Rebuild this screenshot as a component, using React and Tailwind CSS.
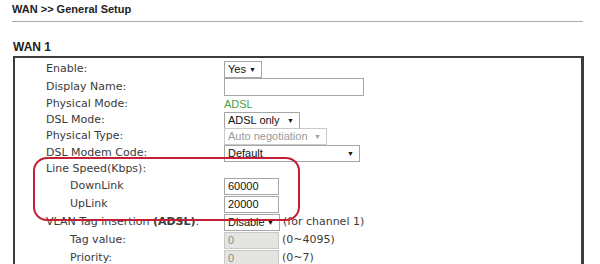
import React from "react";

const labelFont = { fontFamily: '"DejaVu Sans", Verdana, sans-serif' };
const ctrlFont = { fontFamily: '"Liberation Sans", Arial, sans-serif' };

function Select({ value, width, disabled }) {
  return (
    <div
      style={ctrlFont}
      className={`flex h-[17px] items-center justify-between border bg-white pl-[3px] pr-[5px] text-[11px] leading-none ${
        disabled ? "border-[#c9c9c9] text-[#9a9a9a]" : "border-[#a6a6a6] text-[#111]"
      } ${width}`}
    >
      <span>{value}</span>
      <span className={`text-[7px] ${disabled ? "text-[#9a9a9a]" : "text-[#111]"}`}>▼</span>
    </div>
  );
}

function Input({ value, width, disabled, height = "h-[17px]" }) {
  return (
    <div
      style={ctrlFont}
      className={`flex items-center border pl-[3px] text-[11px] leading-none ${height} ${width} ${
        disabled ? "border-[#c9c9c9] bg-[#e4e4e1] text-[#8a8a8a]" : "border-[#a6a6a6] bg-white text-[#111]"
      }`}
    >
      {value}
    </div>
  );
}

function Row({ h, label, indent, children }) {
  return (
    <div className={`flex items-center ${h}`}>
      <div className={`w-[178px] shrink-0 text-[11px] text-[#3a3a3a] ${indent ? "pl-6" : ""}`} style={labelFont}>
        {label}
      </div>
      <div className="flex items-center">{children}</div>
    </div>
  );
}

function Note({ children }) {
  return (
    <span className="ml-[3px] text-[11px] text-[#3a3a3a]" style={labelFont}>
      {children}
    </span>
  );
}

export default function App() {
  return (
    <div className="relative h-[264px] w-[600px] overflow-hidden bg-white">
      <div className="pl-3 pt-[3px] text-[11px] font-bold leading-[13px] text-[#222]" style={ctrlFont}>
        WAN &gt;&gt; General Setup
      </div>
      <div className="ml-3 mt-[5px] h-px w-[571px] bg-[#a8a8a8]" />
      <div className="ml-[13px] mt-[18px] text-[12px] font-bold leading-[14px] text-[#222]" style={ctrlFont}>
        WAN 1
      </div>
      <div className="ml-[13px] mt-[2px] w-[571px] border-2 border-r-[3px] border-[#3c3c3c] pl-[31px] pt-[2px]">
        <Row h="h-[18px]" label="Enable:">
          <Select value="Yes" width="w-[38px]" />
        </Row>
        <Row h="h-[18px]" label="Display Name:">
          <Input value="" width="w-[140px]" height="h-[18px]" />
        </Row>
        <Row h="h-[16px]" label="Physical Mode:">
          <span className="text-[11px] text-[#46a046]" style={ctrlFont}>
            ADSL
          </span>
        </Row>
        <Row h="h-[16px]" label="DSL Mode:">
          <Select value="ADSL only" width="w-[76px]" />
        </Row>
        <Row h="h-[17px]" label="Physical Type:">
          <Select value="Auto negotiation" width="w-[103px]" disabled />
        </Row>
        <Row h="h-[16px]" label="DSL Modem Code:">
          <Select value="Default" width="w-[136px]" />
        </Row>
        <Row h="h-[17px]" label="Line Speed(Kbps):" />
        <Row h="h-[17px]" label="DownLink" indent>
          <Input value="60000" width="w-[55px]" />
        </Row>
        <Row h="h-[19px]" label="UpLink" indent>
          <Input value="20000" width="w-[55px]" />
        </Row>
        <Row
          h="h-[17px]"
          label={
            <>
              VLAN Tag insertion <b>(ADSL)</b>:
            </>
          }
        >
          <Select value="Disable" width="w-[56px]" />
          <Note>(for channel 1)</Note>
        </Row>
        <Row h="h-[18px]" label="Tag value:" indent>
          <Input value="0" width="w-[55px]" disabled />
          <Note>(0~4095)</Note>
        </Row>
        <Row h="h-[19px]" label="Priority:" indent>
          <Input value="0" width="w-[55px]" disabled />
          <Note>(0~7)</Note>
        </Row>
      </div>
      <div className="absolute left-[33px] top-[157px] h-[64px] w-[267px] rounded-[14px] border-2 border-[#c41f35]" />
    </div>
  );
}
